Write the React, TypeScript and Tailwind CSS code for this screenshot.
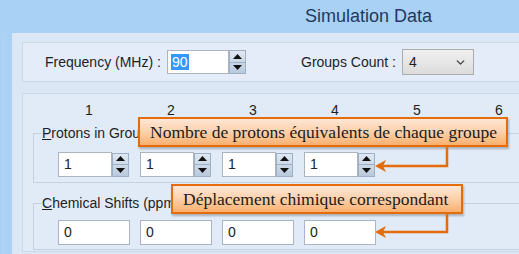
import React from 'react';
import { ChevronDown } from 'lucide-react';

const Spinner: React.FC = () => (
  <div className="flex flex-col w-[17px] h-[24px] border border-[#9fb0c4] bg-gradient-to-b from-[#dfe8f3] to-[#b9c9dc]">
    <div className="flex-1 flex items-center justify-center border-b border-[#9fb0c4]">
      <svg width="9" height="5" viewBox="0 0 9 5"><polygon points="0,5 4.5,0 9,5" fill="#111" /></svg>
    </div>
    <div className="flex-1 flex items-center justify-center">
      <svg width="9" height="5" viewBox="0 0 9 5"><polygon points="0,0 4.5,5 9,0" fill="#111" /></svg>
    </div>
  </div>
);

const NumBox: React.FC<{ value: string; w: string; spin?: boolean }> = ({ value, w, spin }) => (
  <div className="flex items-center">
    <div className={`${w} h-[25px] bg-white border border-[#abb5c2] flex items-center pl-[5px] text-[14px] text-[#222]`}>
      {value}
    </div>
    {spin && <Spinner />}
  </div>
);

const Callout: React.FC<{ text: string; className: string }> = ({ text, className }) => (
  <div
    className={`absolute h-[30px] border-2 border-[#e46c0a] bg-gradient-to-b from-[#fde7d6] via-[#fcd0aa] to-[#f9b06e] flex items-center pl-[10px] font-['Liberation_Serif',serif] text-[17.5px] text-[#1b1b1b] shadow-[1px_2px_2px_rgba(0,0,0,0.25)] ${className}`}
  >
    {text}
  </div>
);

const App: React.FC = () => {
  const protons = ['1', '1', '1', '1'];
  const shifts = ['0', '0', '0', '0'];
  const headers = ['1', '2', '3', '4', '5', '6'];

  return (
    <div className="relative w-[519px] h-[254px] overflow-hidden bg-[#a9d1f5] font-['Liberation_Sans',sans-serif] text-[#1e1e1e]">
      {/* barre de titre */}
      <div className="h-[33px] pl-[305px] flex items-center text-[18px] text-[#1f3a5c]">Simulation Data</div>

      <div className="flex h-[221px]">
        <div className="w-[12px] shrink-0 pl-[3px]">
          <div className="w-px h-full bg-[#b9d3ea]" />
        </div>

        <div className="flex-1 min-w-0 overflow-hidden bg-[#dce7f5] pt-[9px] pl-[10px] pb-[2px] flex flex-col">
          {/* Fréquence */}
          <div className="h-[40px] shrink-0 border border-r-0 border-[#cdd8e6] bg-[#e3ecf8] flex items-center pl-[22px] text-[14px] whitespace-nowrap">
            <span className="w-[122px] shrink-0">Frequency (MHz) :</span>
            <div className="flex items-center shrink-0">
              <div className="w-[62px] h-[24px] bg-white border border-[#abb5c2] flex items-center pl-[3px]">
                <span className="bg-[#3399ff] text-white px-px leading-[16px]">90</span>
              </div>
              <Spinner />
            </div>
            <span className="ml-[55px] w-[101px] shrink-0">Groups Count :</span>
            <div className="w-[72px] h-[26px] shrink-0 border border-[#acacac] bg-gradient-to-b from-[#f0f0f0] to-[#dcdcdc] flex items-center justify-between pl-[6px] pr-[6px]">
              <span>4</span>
              <ChevronDown size={13} strokeWidth={2.5} color="#444" />
            </div>
          </div>

          {/* Groupes */}
          <div className="mt-[11px] flex-1 border border-r-0 border-[#cdd8e6] bg-[#e1eaf7] flex flex-col">
            <div className="flex pt-[8px] ml-[25px] text-[14px] leading-[16px]">
              {headers.map(h => (
                <div key={h} className="w-[82px] shrink-0 text-center">{h}</div>
              ))}
            </div>

            <fieldset className="mt-[7px] ml-[10px] border border-r-0 border-[#c6d1de] pt-[11px] pb-[5px]">
              <legend className="ml-[7px] px-px text-[14px] leading-[16px] whitespace-nowrap">
                <span className="underline">P</span>rotons in Group
              </legend>
              <div className="flex gap-[11px] pl-[24px]">
                {protons.map((v, i) => (
                  <NumBox key={i} value={v} w="w-[54px]" spin />
                ))}
              </div>
            </fieldset>

            <fieldset className="mt-[12px] ml-[10px] border border-r-0 border-[#c6d1de] pt-[9px] pb-[4px]">
              <legend className="ml-[7px] px-px text-[14px] leading-[16px] whitespace-nowrap">
                <span className="underline">C</span>hemical Shifts (ppm)
              </legend>
              <div className="flex gap-[10px] pl-[24px]">
                {shifts.map((v, i) => (
                  <NumBox key={i} value={v} w="w-[72px]" />
                ))}
              </div>
            </fieldset>
          </div>
        </div>
      </div>

      {/* annotations */}
      <Callout text="Nombre de protons équivalents de chaque groupe" className="left-[138px] top-[117px] w-[370px]" />
      <Callout text="Déplacement chimique correspondant" className="left-[171px] top-[184px] w-[292px]" />
      <svg className="absolute left-0 top-0 pointer-events-none" width="519" height="254" viewBox="0 0 519 254">
        <polyline points="447,147 447,166 382,166" fill="none" stroke="#e46c0a" strokeWidth="2.5" />
        <polygon points="375,166 386,160 383,166 386,172" fill="#e46c0a" />
        <polyline points="447,214 447,232 382,232" fill="none" stroke="#e46c0a" strokeWidth="2.5" />
        <polygon points="375,232 386,226 383,232 386,238" fill="#e46c0a" />
      </svg>
    </div>
  );
};

export default App;
